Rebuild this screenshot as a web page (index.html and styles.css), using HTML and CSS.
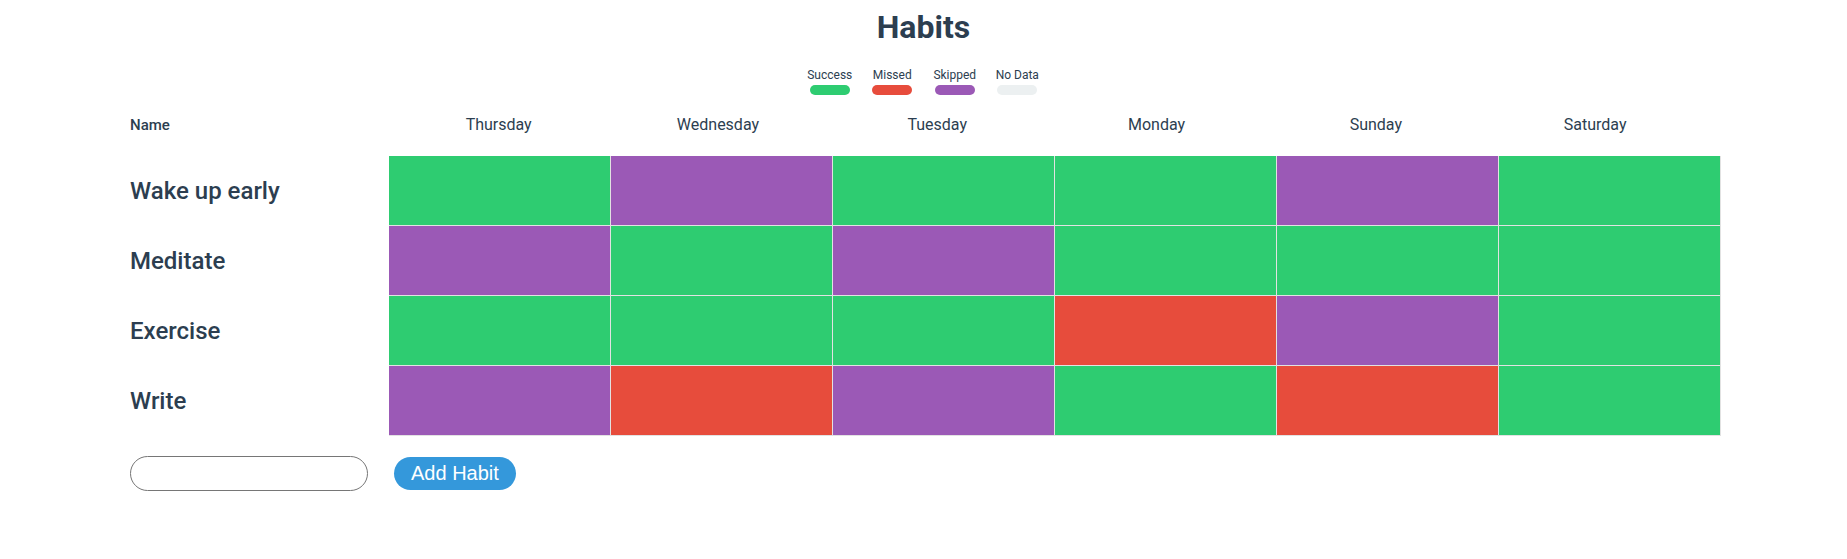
FILE: index.html
```html
<!DOCTYPE html>
<html>
<head>
<meta charset="utf-8">
<title>Habits</title>
<link rel="stylesheet" href="styles.css">
</head>
<body>
<div class="app">
  <h1 class="title">Habits</h1>
  <div class="legend">
    <div class="legend-item"><span class="legend-label">Success</span><span class="pill success"></span></div>
    <div class="legend-item"><span class="legend-label">Missed</span><span class="pill missed"></span></div>
    <div class="legend-item"><span class="legend-label">Skipped</span><span class="pill skipped"></span></div>
    <div class="legend-item"><span class="legend-label">No Data</span><span class="pill nodata"></span></div>
  </div>
  <div class="board">
    <div class="header">
      <div class="name-head">Name</div>
      <div class="day">Thursday</div>
      <div class="day">Wednesday</div>
      <div class="day">Tuesday</div>
      <div class="day">Monday</div>
      <div class="day">Sunday</div>
      <div class="day">Saturday</div>
    </div>
    <div class="row">
      <div class="name">Wake up early</div>
      <div class="cell success"></div>
      <div class="cell skipped"></div>
      <div class="cell success"></div>
      <div class="cell success"></div>
      <div class="cell skipped"></div>
      <div class="cell success"></div>
    </div>
    <div class="row">
      <div class="name">Meditate</div>
      <div class="cell skipped"></div>
      <div class="cell success"></div>
      <div class="cell skipped"></div>
      <div class="cell success"></div>
      <div class="cell success"></div>
      <div class="cell success"></div>
    </div>
    <div class="row">
      <div class="name">Exercise</div>
      <div class="cell success"></div>
      <div class="cell success"></div>
      <div class="cell success"></div>
      <div class="cell missed"></div>
      <div class="cell skipped"></div>
      <div class="cell success"></div>
    </div>
    <div class="row">
      <div class="name">Write</div>
      <div class="cell skipped"></div>
      <div class="cell missed"></div>
      <div class="cell skipped"></div>
      <div class="cell success"></div>
      <div class="cell missed"></div>
      <div class="cell success"></div>
    </div>
  </div>
  <div class="add">
    <input class="add-input" type="text">
    <button class="add-button">Add Habit</button>
  </div>
</div>
</body>
</html>
```
FILE: styles.css
```css
* { box-sizing: border-box; }
body {
  margin: 8px;
  font-family: Roboto, "Liberation Sans", sans-serif;
  color: #2c3e50;
  background: #fff;
}
.title {
  margin: 0;
  text-align: center;
  font-size: 32px;
  font-weight: 700;
  line-height: 38px;
}
.legend {
  display: flex;
  justify-content: center;
  gap: 17.5px;
  margin-top: 22px;
}
.legend-item {
  display: flex;
  flex-direction: column;
  align-items: center;
  width: 45px;
}
.legend-label {
  font-size: 12px;
  line-height: 14px;
}
.pill {
  display: block;
  width: 40px;
  height: 10px;
  border-radius: 5px;
  margin-top: 3px;
}
.success { background: #2ecc71; }
.missed { background: #e74c3c; }
.skipped { background: #9b59b6; }
.nodata { background: #ecf0f1; }
.board {
  margin-left: 122px;
  margin-top: 20px;
}
.header {
  display: flex;
  align-items: baseline;
  height: 41px;
}
.name-head {
  width: 259px;
  font-size: 15px;
  font-weight: 500;
  line-height: 19px;
}
.day {
  width: 219.3px;
  text-align: center;
  font-size: 16px;
  line-height: 19px;
}
.row {
  display: flex;
  align-items: center;
}
.name {
  width: 259px;
  font-size: 24px;
  font-weight: 500;
}
.cell {
  width: 222px;
  height: 70px;
  border-right: 1px solid #e2e2e2;
  border-bottom: 1px solid #e2e2e2;
}
.add {
  display: flex;
  align-items: center;
  gap: 26px;
  margin-left: 122px;
  margin-top: 20px;
}
.add-input {
  width: 238px;
  height: 35px;
  border: 1px solid #767676;
  border-radius: 18px;
  padding: 0 12px;
  font-size: 16px;
  background: #fff;
}
.add-button {
  height: 33px;
  padding: 0 17px;
  border: none;
  border-radius: 17px;
  background: #3498db;
  color: #fff;
  font-family: "Liberation Sans", Arial, sans-serif;
  font-size: 20px;
  line-height: 23px;
}
```
